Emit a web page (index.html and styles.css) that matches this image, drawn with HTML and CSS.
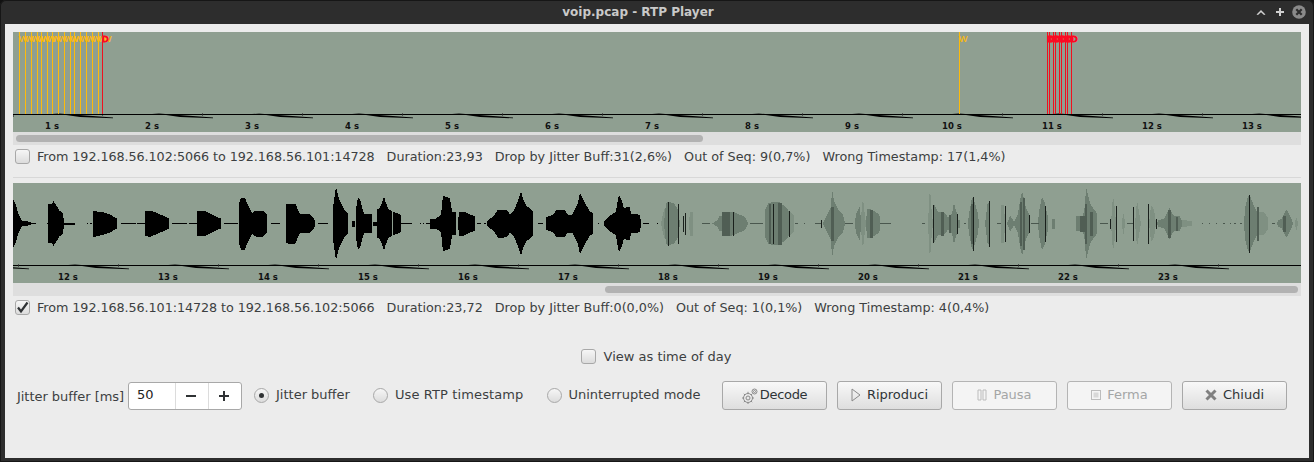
FILE: index.html
```html
<!DOCTYPE html>
<html lang="en">
<head>
<meta charset="utf-8">
<title>voip.pcap - RTP Player</title>
<link rel="stylesheet" href="styles.css">
</head>
<body>
<div class="window">
  <header class="titlebar">
    <span class="title">voip.pcap - RTP Player</span>
    <div class="win-buttons">
      <svg class="win-icon win-icon-up" viewBox="0 0 10 10"><path d="M0.500 7.500 5 3l4.500 4.500-1.500.5L5 5.300 2 8z"/></svg>
      <svg class="win-icon win-icon-max" viewBox="0 0 10 10"><path d="M4 1h2v3h3v2H6v3H4V6H1V4h3z"/></svg>
      <svg class="win-close" viewBox="0 0 14 14"><circle cx="7" cy="7" r="6.800"/><path d="M4.300 4.300l5.400 5.400M9.700 4.300l-5.400 5.400"/></svg>
    </div>
  </header>
  <main class="content">
    <section class="stream">
      <svg class="plot" viewBox="13 32 1288 100">
        <defs>
          <polygon id="wedge" points="0,-1 61,3.500 61,4.300 28,2.900"/>
        </defs>
        <rect class="axis" x="13" y="114" width="1288" height="1"/>
        <g transform="translate(0 114)">
          <use href="#wedge" x="52"/><use href="#wedge" x="152"/><use href="#wedge" x="252"/><use href="#wedge" x="352"/><use href="#wedge" x="452"/><use href="#wedge" x="552"/><use href="#wedge" x="652"/><use href="#wedge" x="752"/><use href="#wedge" x="852"/><use href="#wedge" x="952"/><use href="#wedge" x="1052"/><use href="#wedge" x="1152"/><use href="#wedge" x="1252"/>
        </g>
        <path class="tick" d="M13.500 115V117M102.500 115V116M202.500 113V116M302.500 113V116M402.500 113V116M502.500 113V116M602.500 113V116M702.500 113V116M802.500 113V116M902.500 113V116M1002.500 113V116M1102.500 113V116M1202.500 113V116"/>
        <path class="orange-line" d="M19.500 32V114M25.500 32V114M31.500 32V114M37.500 32V114M41.500 32V114M47.500 32V114M52.500 32V114M58.500 32V114M64.500 32V114M70.500 32V114M74.500 32V114M80.500 32V114M86.500 32V114M92.500 32V114M98.500 32V114M959.500 32V114"/>
        <path class="red-line" d="M102.500 32V114M1047.500 32V114M1049.500 32V114M1053.500 32V114M1055.500 32V114M1059.500 32V114M1061.500 32V114M1065.500 32V114M1067.500 32V114M1071.500 32V114"/>
        <g class="mark-w">
          <text x="19" y="42">W</text><text x="25" y="42">W</text><text x="31" y="42">W</text><text x="37" y="42">W</text><text x="41" y="42">W</text><text x="47" y="42">W</text><text x="52" y="42">W</text><text x="58" y="42">W</text><text x="64" y="42">W</text><text x="70" y="42">W</text><text x="74" y="42">W</text><text x="80" y="42">W</text><text x="86" y="42">W</text><text x="92" y="42">W</text><text x="98" y="42">W</text><text x="103" y="42">W</text><text x="959" y="42">W</text>
        </g>
        <g class="mark-d">
          <text x="102" y="42">D</text><text x="1047" y="42">D</text><text x="1049" y="42">D</text><text x="1053" y="42">D</text><text x="1055" y="42">D</text><text x="1059" y="42">D</text><text x="1061" y="42">D</text><text x="1065" y="42">D</text><text x="1067" y="42">D</text><text x="1071" y="42">D</text>
        </g>
        <g class="time">
          <text x="52" y="129">1 s</text><text x="152" y="129">2 s</text><text x="252" y="129">3 s</text><text x="352" y="129">4 s</text><text x="452" y="129">5 s</text><text x="552" y="129">6 s</text><text x="652" y="129">7 s</text><text x="752" y="129">8 s</text><text x="852" y="129">9 s</text><text x="952" y="129">10 s</text><text x="1052" y="129">11 s</text><text x="1152" y="129">12 s</text><text x="1252" y="129">13 s</text>
        </g>
      </svg>
      <div class="track"><div class="thumb thumb-start"></div></div>
      <div class="info">
        <span class="box"></span>
        <span class="info-from">From 192.168.56.102:5066 to 192.168.56.101:14728</span>
        <span>Duration:23,93</span>
        <span>Drop by Jitter Buff:31(2,6%)</span>
        <span>Out of Seq: 9(0,7%)</span>
        <span>Wrong Timestamp: 17(1,4%)</span>
      </div>
    </section>
    <hr class="separator">
    <section class="stream">
      <svg class="plot" viewBox="13 183 1288 100">
        <defs>
          <g id="half">
            <g class="w-pale" shape-rendering="crispEdges">
              <polygon points="661,0 664,-14 668,-18 672,-14 673,0"/>
              <polygon points="689,0 690,-12 693,-12 693,0"/>
              <polygon points="790,0 790,-12 794,-8 794,0"/>
              <polygon points="860,0 862,-15 863,-27 864,-15 866,0"/>
              <polygon points="928,0 929,-20 930,-38 931,-20 933,0"/>
              <polygon points="1001,0 1001,-19 1004,-19 1005,0"/>
              <polygon points="1111,0 1112,-14 1113,-28 1115,-14 1116,0"/>
              <polygon points="1122,0 1123,-10 1124,-10 1125,0"/>
              <polygon points="1135,0 1137,-23 1139,-12 1141,0"/>
              <polygon points="1149,0 1151,-18 1154,-14 1156,0"/>
              <polygon points="1176,0 1182,-4 1192,-2 1192,0"/>
              <polygon points="1295,0 1296,-6 1297,-6 1298,0"/>
              <polygon points="1257,0 1258,-12 1264,-11 1268,-6 1268,0"/>
            </g>
            <g class="w-mid" shape-rendering="crispEdges">
              <polygon points="664,0 666,-20 668,-22 674,-20 678,-14 680,0"/>
              <polygon points="712,0 718,-4 719,-7 722,-8 723,-12 732,-12 737,-10 744,-7 747,-3 748,0"/>
              <polygon points="765,0 765,-14 768,-20 773,-22 780,-21 786,-16 790,-11 790,0"/>
              <polygon points="823,0 826,-7 828,-11 831,-16 832,-35 834,-22 838,-14 843,-9 845,0"/>
              <polygon points="855,0 856,-10 860,-17 861,0"/>
              <polygon points="866,0 867,-15 871,-14 878,-10 880,-7 880,0"/>
              <polygon points="934,0 934,-19 938,-12 945,-10 948,-6 952,-10 954,-21 956,-12 958,-8 958,0"/>
              <polygon points="958,0 958,-4 960,-4 960,0"/>
              <polygon points="968,0 969,-10 971,-20 972,-27 975,-20 978,-10 979,0"/>
              <polygon points="985,0 986,-8 987,-16 988,-23 990,-12 990,0"/>
              <polygon points="1007,0 1010,-8 1014,-2 1018,-10 1021,-28 1022,-32 1024,-24 1026,-15 1029,-9 1030,0"/>
              <polygon points="1038,0 1039,-12 1042,-27 1045,-20 1048,-6 1048,0"/>
              <polygon points="1052,0 1052,-5 1055,-5 1055,0"/>
              <polygon points="1076,0 1076,-7 1083,-8 1085,-18 1086,-36 1088,-28 1091,-18 1094,-14 1097,-10 1097,0"/>
              <polygon points="1157,0 1158,-3 1164,-5 1168,-12 1169,-16 1172,-10 1174,-8 1180,-7 1182,-2 1182,0"/>
              <polygon points="1244,0 1245,-15 1247,-24 1249,-29 1251,-25 1254,-17 1257,-12 1257,0"/>
              <polygon points="1277,0 1278,-3 1282,-5 1285,-12 1286,-14 1289,-10 1292,-3 1293,0"/>
            </g>
            <g class="w-dark" shape-rendering="crispEdges">
              <rect x="722" y="-12" width="8" height="12"/>
              <rect x="769" y="-20" width="2" height="20"/>
              <rect x="778" y="-21" width="4" height="21"/>
              <rect x="831" y="-17" width="3" height="17"/>
              <rect x="870" y="-14" width="3" height="14"/>
              <rect x="941" y="-12" width="3" height="12"/>
              <rect x="949" y="-9" width="2" height="9"/>
              <rect x="971" y="-20" width="2" height="20"/>
              <rect x="1020" y="-22" width="2" height="22"/>
              <rect x="1023" y="-26" width="2" height="26"/>
              <rect x="1080" y="-8" width="5" height="8"/>
              <rect x="1085" y="-20" width="2" height="20"/>
              <rect x="1090" y="-12" width="3" height="12"/>
              <rect x="1168" y="-14" width="3" height="14"/>
              <rect x="1176" y="-7" width="2" height="7"/>
              <rect x="1257" y="-17" width="2" height="17"/>
              <rect x="1283" y="-8" width="3" height="8"/>
            </g>
            <path class="w-stroke" shape-rendering="crispEdges" d="M668.500 0V-22M678.500 0V-20M683.500 0V-8M685.500 0V-11M733.500 0V-12M773.500 0V-20M789.500 0V-13M821.500 0V-4M933.500 0V-19M957.500 0V-10M973.500 0V-27M989.500 0V-23M1005.500 0V-18M1029.500 0V-9M1045.500 0V-18M1110.500 0V-5M1116.500 0V-18M1133.500 0V-17M1148.500 0V-20M1156.500 0V-5M1249.500 0V-29"/>
            <g class="w-black" shape-rendering="crispEdges">
              <polygon points="13,0 13,-24 16,-18 19,-8 22,-3 28,-2 31,-1 31,0"/>
              <polygon points="47,0 48,-1 48,-19 51,-20 52,-19 53,-23 55,-20 57,-17 59,-13 61,-12 63,-10 64,-1 75,-1 75,0"/>
              <polygon points="93,0 93,-13 96,-13 97,-12 100,-12 104,-11 107,-10 110,-9 113,-7 117,-5 117,0"/>
              <polygon points="145,0 145,-12 148,-13 151,-13 153,-12 158,-10 160,-9 165,-7 169,-5 169,0"/>
              <polygon points="197,0 197,-12 203,-13 206,-12 212,-9 218,-6 221,-5 221,0"/>
              <polygon points="239,0 239,-20 241,-26 245,-26 247,-20 250,-14 252,-10 254,-12 256,-13 263,-13 266,-10 267,-9 267,0"/>
              <polygon points="286,0 286,-19 288,-20 295,-20 297,-16 299,-11 301,-9 303,-10 310,-9 313,-6 315,-3 315,0"/>
              <polygon points="333,0 333,-16 335,-30 336,-38 337,-32 338,-28 340,-22 343,-16 345,-13 348,-10 348,0"/>
              <polygon points="352,0 352,-3 355,-3 355,0"/>
              <polygon points="356,0 356,-14 358,-26 360,-24 362,-16 364,-10 372,-9 372,0"/>
              <polygon points="373,0 373,-2 377,-2 377,-14 380,-16 382,-21 384,-27 385,-23 388,-15 392,-12 392,0"/>
              <polygon points="393,0 393,-12 400,-9 401,-8 401,0"/>
              <polygon points="430,0 430,-5 436,-5 441,-9 443,-28 450,-25 452,-12 456,-11 456,0"/>
              <polygon points="458,0 459,-12 464,-12 470,-9 475,-7 475,0"/>
              <polygon points="487,0 487,-2 494,-8 496,-11 498,-14 504,-14 507,-13 510,-9 513,-12 516,-18 519,-26 521,-32 523,-24 526,-18 530,-15 533,-12 533,0"/>
              <polygon points="546,0 546,-6 553,-9 556,-13 564,-14 568,-9 572,-9 577,-18 579,-26 580,-31 582,-26 585,-20 590,-12 593,-10 593,0"/>
              <polygon points="604,0 604,-2 608,-6 610,-8 616,-12 618,-25 619,-28 622,-22 624,-15 627,-17 630,-16 631,-10 638,-9 640,-8 641,-2 641,0"/>
            </g>
          </g>
        </defs>
        <g transform="translate(0 223.500)">
          <use href="#half"/>
          <use href="#half" transform="scale(1 -1)"/>
        </g>
        <path class="w-line" d="M31 223.500H36M121 223.500H136M137 223.500H145M172 223.500H187M189 223.500H197M224 223.500H238M271 223.500H280M318 223.500H328M401 223.500H412M477 223.500H481M538 223.500H543M598 223.500H599M643 223.500H649M657 223.500H658M87 223.500H88M90 223.500H92M420 223.500H421M423 223.500H424M426 223.500H430M484 223.500H486"/>
        <path class="w-line-soft" d="M702 223.500H710M750 223.500H763M795 223.500H798M804 223.500H805M815 223.500H821M845 223.500H853M880 223.500H891M922 223.500H925M997 223.500H1001M1031 223.500H1039M1100 223.500H1108M1127 223.500H1133M1202 223.500H1203M1209 223.500H1210M1216 223.500H1217M1223 223.500H1225M1230 223.500H1231M1234 223.500H1236M1240 223.500H1242M1272 223.500H1275M964 223.500H966"/>
        <rect class="axis" x="13" y="265" width="1288" height="1"/>
        <g transform="translate(0 265)">
          <use href="#wedge" x="-32"/><use href="#wedge" x="68"/><use href="#wedge" x="168"/><use href="#wedge" x="268"/><use href="#wedge" x="368"/><use href="#wedge" x="468"/><use href="#wedge" x="568"/><use href="#wedge" x="668"/><use href="#wedge" x="768"/><use href="#wedge" x="868"/><use href="#wedge" x="968"/><use href="#wedge" x="1068"/><use href="#wedge" x="1168"/>
        </g>
        <path class="tick" d="M18.500 264V267M118.500 264V267M218.500 264V267M318.500 264V267M418.500 264V267M518.500 264V267M618.500 264V267M718.500 264V267M818.500 264V267M918.500 264V267M1018.500 264V267M1118.500 264V267M1218.500 264V267"/>
        <g class="time">
          <text x="68" y="280">12 s</text><text x="168" y="280">13 s</text><text x="268" y="280">14 s</text><text x="368" y="280">15 s</text><text x="468" y="280">16 s</text><text x="568" y="280">17 s</text><text x="668" y="280">18 s</text><text x="768" y="280">19 s</text><text x="868" y="280">20 s</text><text x="968" y="280">21 s</text><text x="1068" y="280">22 s</text><text x="1168" y="280">23 s</text>
        </g>
      </svg>
      <div class="track"><div class="thumb thumb-end"></div></div>
      <div class="info">
        <span class="box box-checked">
          <svg viewBox="0 0 15 15"><path d="M3 7.500 6 11.500 12.500 2.500"/></svg>
        </span>
        <span class="info-from">From 192.168.56.101:14728 to 192.168.56.102:5066</span>
        <span>Duration:23,72</span>
        <span>Drop by Jitter Buff:0(0,0%)</span>
        <span>Out of Seq: 1(0,1%)</span>
        <span>Wrong Timestamp: 4(0,4%)</span>
      </div>
    </section>
    <div class="time-of-day">
      <span class="box"></span>
      <span>View as time of day</span>
    </div>
    <div class="controls">
      <span class="jitter-label">Jitter buffer [ms]</span>
      <div class="spin">
        <span class="spin-value">50</span>
        <span class="spin-btn">
          <svg viewBox="0 0 10 10"><path d="M0 5H10"/></svg>
        </span>
        <span class="spin-btn">
          <svg viewBox="0 0 10 10"><path d="M0 5H10M5 0V10"/></svg>
        </span>
      </div>
      <label class="radio-item radio-first"><span class="radio radio-on"></span>Jitter buffer</label>
      <label class="radio-item radio-rtp"><span class="radio"></span>Use RTP timestamp</label>
      <label class="radio-item radio-mode"><span class="radio"></span>Uninterrupted mode</label>
      <div class="buttons">
        <button class="btn">
          <svg class="btn-icon btn-icon-gear" viewBox="0 0 16 16"><circle cx="6" cy="10" r="4.500"/><circle cx="6" cy="10" r="2"/><circle cx="12.500" cy="3.500" r="2.500"/><circle cx="12.500" cy="3.500" r="1"/><path d="M6 3.800V5.500M6 14.500V16M0 10H1.500M10.500 10H12M1.800 5.800 3 7M9 13l1.200 1.200M1.800 14.200 3 13M9 7l1.200-1.200"/></svg>
          <span class="btn-decode">Decode</span>
        </button>
        <button class="btn">
          <svg class="btn-icon btn-icon-play" viewBox="0 0 10 14"><path d="M1 1 9 7 1 13z"/></svg>
          Riproduci
        </button>
        <button class="btn" disabled>
          <svg class="btn-icon btn-icon-pause" viewBox="0 0 10 12"><path d="M1 1H4V11H1zM6 1H9V11H6z"/></svg>
          Pausa
        </button>
        <button class="btn" disabled>
          <svg class="btn-icon btn-icon-stop" viewBox="0 0 10 10"><rect x="0.500" y="0.500" width="9" height="9"/><rect class="stop-inner" x="2.500" y="2.500" width="5" height="5"/></svg>
          Ferma
        </button>
        <button class="btn">
          <svg class="btn-icon btn-icon-close" viewBox="0 0 12 12"><path d="M1.500 1.500 10.500 10.500M10.500 1.500 1.500 10.500"/></svg>
          Chiudi
        </button>
      </div>
    </div>
  </main>
</div>
</body>
</html>
```
FILE: styles.css
```css
* { box-sizing: border-box; }
html, body { margin: 0; padding: 0; background: #111; }
body { width: 1314px; height: 462px; overflow: hidden; font-family: "DejaVu Sans", sans-serif; font-size: 13px; color: #3c3f41; }
.window { width: 1314px; height: 462px; display: flex; flex-direction: column; background: #2d2d2d; border-radius: 6px 6px 0 0; box-shadow: inset 0 0 0 1px #161616; }
.titlebar { height: 24px; flex: none; position: relative; display: flex; align-items: center; justify-content: center; }
.title { font-size: 12px; font-weight: 700; color: #c9c9c9; margin-left: -38px; }
.win-buttons { position: absolute; right: 8px; top: 5px; display: flex; align-items: center; }
.win-icon { width: 10px; height: 10px; fill: #d0d0d0; }
.win-icon-max { margin-left: 9px; margin-right: 7px; }
.win-close { width: 14px; height: 14px; }
.win-close circle { fill: #8a8a8a; }
.win-close path { stroke: #2d2d2d; stroke-width: 2.200; fill: none; }
.content { flex: none; height: 434px; margin: 0 5px; padding: 8px 8px 0; background: #ececec; display: flex; flex-direction: column; }
.stream { flex: none; }
.plot { display: block; width: 1288px; height: 100px; background: #8f9f91; }
.axis { fill: #000; }
.tick { stroke: #333; stroke-width: 1; fill: none; shape-rendering: crispEdges; opacity: 0.7; }
#wedge { fill: #000; }
.orange-line { stroke: #fdbb0c; stroke-width: 1; fill: none; shape-rendering: crispEdges; }
.red-line { stroke: #f0101e; stroke-width: 1; fill: none; shape-rendering: crispEdges; }
.mark-w text { font-family: "Liberation Sans", sans-serif; font-size: 9px; fill: #fdbb0c; stroke: #fdbb0c; stroke-width: 0.200; }
.mark-d text { font-family: "Liberation Sans", sans-serif; font-size: 9px; fill: #fb0a22; stroke: #fb0a22; stroke-width: 1; }
.time text { font-family: "DejaVu Sans", sans-serif; font-size: 8.500px; font-weight: 700; fill: #111; text-anchor: middle; }
.w-black { fill: #000; }
.w-pale { fill: #7f9082; }
.w-mid { fill: #6d7e71; }
.w-dark { fill: #505e54; }
.w-stroke { stroke: #1a201c; stroke-width: 1; fill: none; }
.w-line { stroke: #000; stroke-width: 1; fill: none; shape-rendering: crispEdges; }
.w-line-soft { stroke: #4a574e; stroke-width: 1; fill: none; shape-rendering: crispEdges; }
.track { height: 13px; display: flex; padding: 3px; background: #dedede; }
.thumb { height: 7px; border-radius: 4px; background: #b2b2b2; }
.thumb-start { width: 687px; }
.thumb-end { width: 693px; margin-left: auto; }
.info { height: 22px; display: flex; align-items: center; gap: 12px; padding-left: 2px; white-space: nowrap; font-size: 12.750px; }
.info-from { margin-left: -5px; letter-spacing: -0.070px; }
.box { width: 15px; height: 15px; flex: none; display: block; border: 1px solid #a8a8a8; border-radius: 3px; background: linear-gradient(#f6f6f6, #dcdcdc); }
.box svg { display: block; width: 15px; height: 15px; margin: -1px; fill: none; stroke: #2f3234; stroke-width: 2.200; }
.separator { margin: 10px 0 5px; height: 1px; border: 0; background: #d8d8d8; flex: none; }
.time-of-day { margin-top: 27px; height: 22px; display: flex; align-items: center; justify-content: center; gap: 8px; flex: none; padding-right: 2px; }
.controls { margin-top: 14px; height: 29px; display: flex; align-items: center; padding-left: 4px; flex: none; }
.jitter-label { width: 111px; flex: none; white-space: nowrap; margin-top: 2px; letter-spacing: -0.040px; }
.spin { width: 114px; height: 28px; flex: none; display: flex; border: 1px solid #a8a8a8; border-radius: 3px; background: #fff; color: #222; }
.spin-value { width: 46.500px; padding-left: 8px; line-height: 24px; }
.spin-btn { width: 33px; border-left: 1px solid #dcdcdc; display: flex; align-items: center; justify-content: center; padding-right: 2px; }
.spin-btn svg { width: 10px; height: 10px; stroke: #2f3234; stroke-width: 2; fill: none; }
.radio-item { display: flex; align-items: center; gap: 7px; white-space: nowrap; margin-left: 24px; margin-top: -3px; }
.radio-first { margin-left: 12px; }
.radio-rtp { margin-left: 23px; letter-spacing: 0.120px; }
.radio-mode { margin-left: 23px; }
.radio { width: 15px; height: 15px; flex: none; border: 1px solid #a8a8a8; border-radius: 50%; background: linear-gradient(#f6f6f6, #dcdcdc); display: flex; align-items: center; justify-content: center; margin-top: 2px; }
.radio-on::after { content: ""; width: 5px; height: 5px; border-radius: 50%; background: #2f3234; }
.buttons { margin-left: auto; margin-right: 14px; display: flex; gap: 10px; }
.btn { width: 105px; height: 29px; padding: 0 0 2px; display: flex; align-items: center; justify-content: center; gap: 4px; font: inherit; color: #2e3436; border: 1px solid #a8a8a8; border-radius: 3px; background: linear-gradient(#f8f8f8, #dedede); }
.btn:disabled { color: #a4a6a6; background: #f4f4f4; border-color: #b4b4b4; }
.btn-decode { letter-spacing: -0.300px; margin-left: -2px; }
.btn-icon { flex: none; fill: none; stroke: #8a8a8a; stroke-width: 1; }
.btn-icon-gear { width: 16px; height: 16px; margin-top: 2px; }
.btn-icon-play { width: 10px; height: 14px; margin-right: 2px; }
.btn-icon-pause { width: 10px; height: 12px; margin-right: 2px; stroke: #bcbcbc; }
.btn-icon-stop { width: 10px; height: 10px; margin-right: 2px; stroke: #bcbcbc; }
.stop-inner { fill: #d8d8d8; stroke: none; }
.btn-icon-close { width: 12px; height: 12px; stroke: #808080; stroke-width: 3; margin-right: 2px; }
```
